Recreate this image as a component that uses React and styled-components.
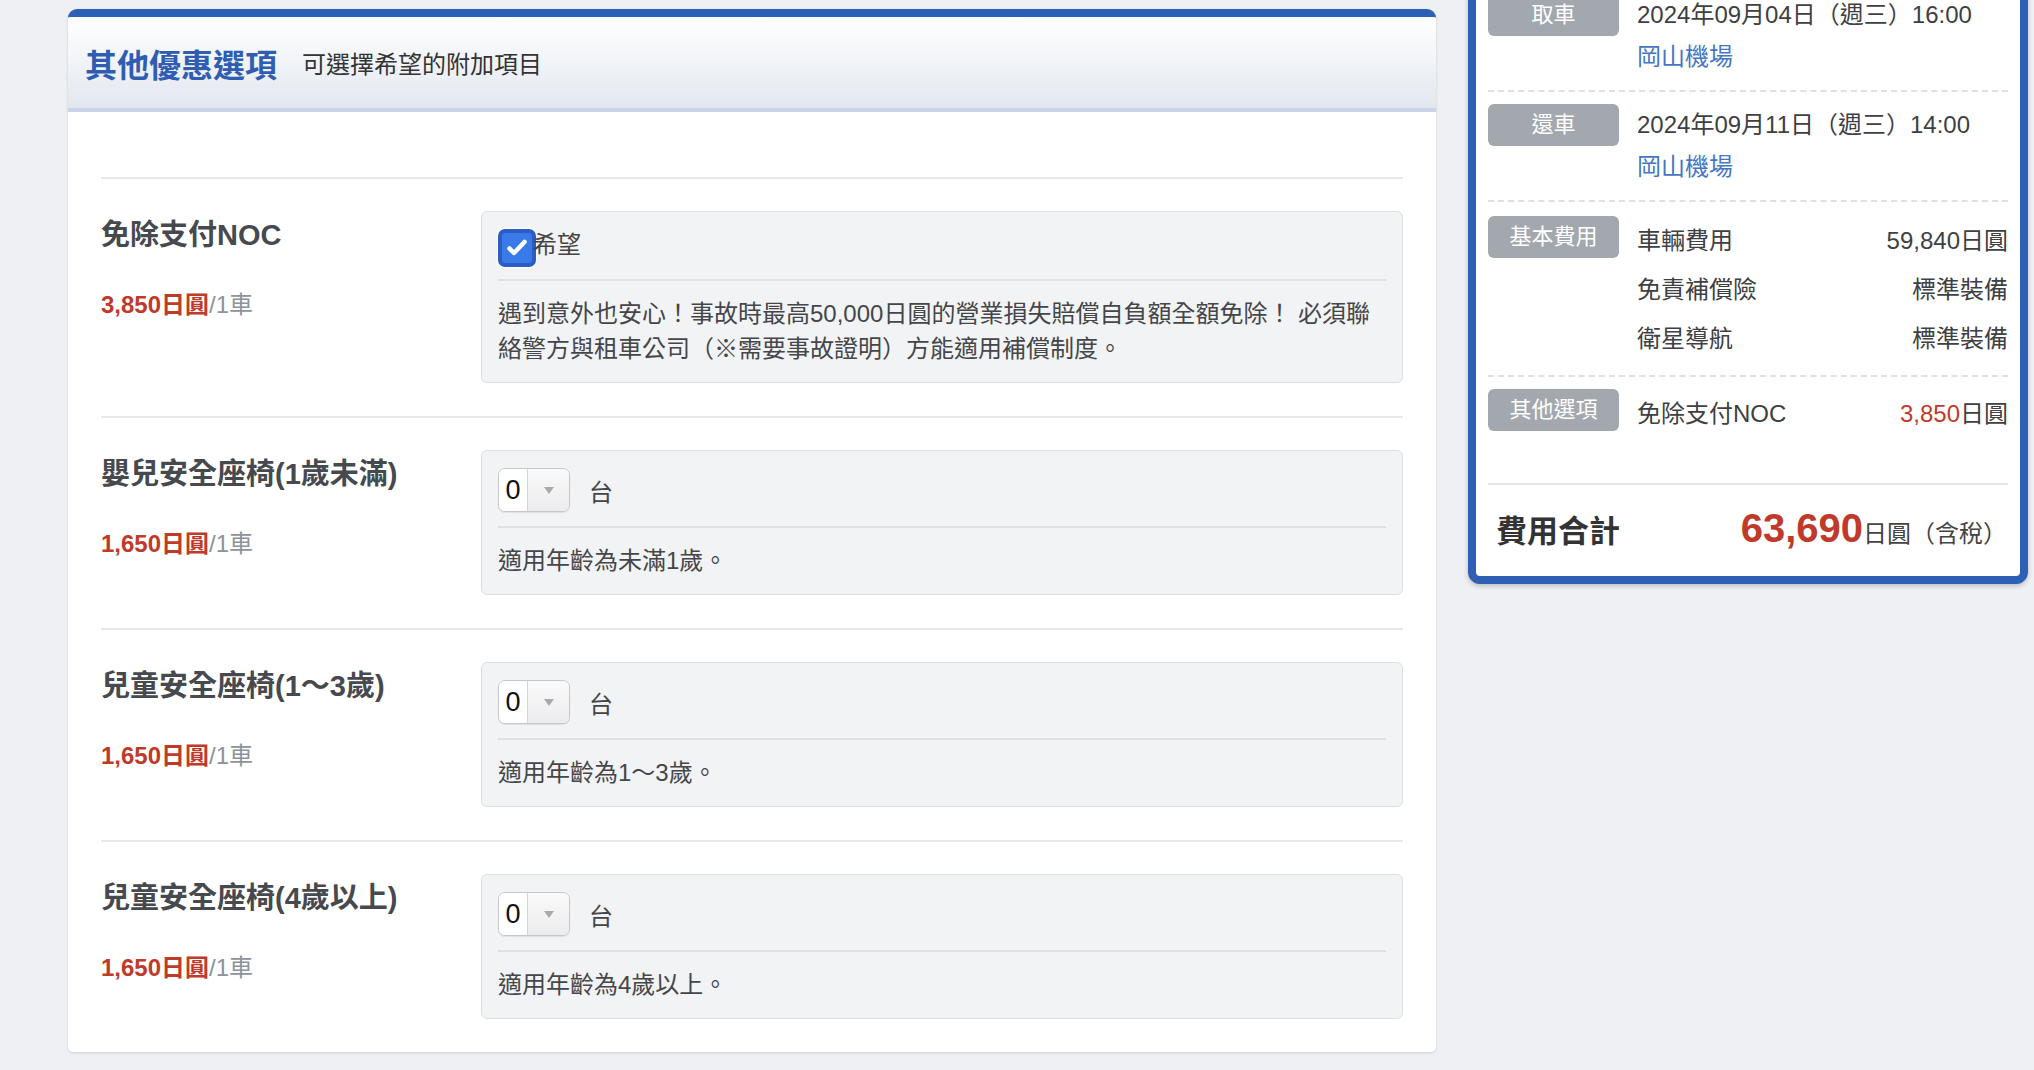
import styled, { createGlobalStyle } from "styled-components"

const GlobalStyle = createGlobalStyle`
    html, body {
        margin: 0;
        padding: 0;
        background: #eff0f4;
        font-family: "Liberation Sans", "Noto Sans CJK TC", sans-serif;
        color: #3e4043;
        overflow: hidden;
    }
`

const Page = styled.div`
    display: flex;
    align-items: flex-start;
    gap: 32px;
    padding: 9px 6px 0 68px;
    min-height: 100vh;
    box-sizing: border-box;
`

const Panel = styled.section`
    width: 1368px;
    flex-shrink: 0;
    background: #fff;
    border-top: 8px solid #2d5fb4;
    border-radius: 9px 9px 5px 5px;
    box-shadow: 0 1px 3px rgba(0, 0, 0, 0.14);
    overflow: hidden;
`

const PanelHeader = styled.header`
    display: flex;
    align-items: center;
    height: 91px;
    padding-left: 17px;
    background: linear-gradient(#ffffff, #e2e7ef);
    border-bottom: 4px solid #c9d5e7;
`

const PanelTitle = styled.h2`
    margin: 0;
    font-size: 32px;
    font-weight: bold;
    color: #2f5db1;
`

const PanelSub = styled.span`
    margin-left: 25px;
    font-size: 24px;
    color: #333;
`

const PanelBody = styled.div`
    padding: 65px 33px 0;
`

const OptionRow = styled.div`
    display: grid;
    grid-template-columns: 380px 1fr;
    border-top: 2px solid #e6e7e9;
    padding: 32px 0 33px;
`

const OptionName = styled.div`
    font-size: 29px;
    line-height: 48px;
    font-weight: bold;
    color: #46494e;
`

const OptionPrice = styled.div`
    margin-top: 28px;
    font-size: 24px;
    line-height: 36px;
    color: #8c939b;

    strong {
        color: #bf3a2b;
    }
`

const OptionBox = styled.div`
    background: #f2f3f5;
    border: 1px solid #dcdee2;
    border-radius: 6px;
    padding: 17px 16px 16px;
`

const ControlLine = styled.div`
    display: flex;
    align-items: center;
    height: ${(p) => p.$h}px;
    font-size: 24px;
    color: #444;
`

const Divider = styled.div`
    height: 2px;
    background: #e0e1e4;
    margin: ${(p) => p.$top}px 0 ${(p) => p.$bottom}px;
`

const Desc = styled.p`
    margin: 0;
    max-width: 884px;
    font-size: 24px;
    line-height: 35px;
    color: #454649;
`

const Check = styled.span`
    display: inline-flex;
    align-items: center;
    justify-content: center;
    width: 38px;
    height: 38px;
    box-sizing: border-box;
    border: 4px solid #2b5dc4;
    border-radius: 7px;
    background: #3a7ae8;
    box-shadow: 0 0 0 1px #fff;
`

const CheckLabel = styled.span`
    margin-left: -3px;
    font-size: 24px;
    line-height: 32px;
    align-self: flex-start;
`

const Select = styled.div`
    display: flex;
    width: 72px;
    height: 44px;
    box-sizing: border-box;
    border: 1px solid #c6c7ca;
    border-radius: 7px;
    overflow: hidden;
    box-shadow: 0 1px 1px rgba(0, 0, 0, 0.08);
`

const SelectValue = styled.span`
    width: 28px;
    background: #fff;
    border-right: 1px solid #d4d5d8;
    font-size: 27px;
    line-height: 42px;
    text-align: center;
    color: #111;
`

const SelectArrow = styled.span`
    flex: 1;
    display: flex;
    align-items: center;
    justify-content: center;
    background: linear-gradient(#fafafa, #ececee);

    &::after {
        content: "";
        border-left: 5px solid transparent;
        border-right: 5px solid transparent;
        border-top: 7px solid #a9aaae;
    }
`

const Unit = styled.span`
    margin-left: 19px;
`

const Sidebar = styled.aside`
    width: 560px;
    flex-shrink: 0;
    margin-top: -35px;
    box-sizing: border-box;
    background: #fff;
    border: 8px solid #2d5fb4;
    border-radius: 12px;
    box-shadow: 0 2px 5px rgba(0, 0, 0, 0.22);
    padding: 0 12px 4px;
`

const SummaryRow = styled.div`
    display: grid;
    grid-template-columns: 131px 1fr;
    column-gap: 18px;
    padding: ${(p) => (p.$top ? p.$top : 12)}px 0 ${(p) => (p.$last ? 45 : 12)}px;
    border-bottom: ${(p) => (p.$last ? "none" : "2px dashed #dfe0e2")};
`

const Badge = styled.div`
    height: 42px;
    line-height: 42px;
    border-radius: 6px;
    background: #a3a8ae;
    color: #fff;
    font-size: 22px;
    text-align: center;
`

const Lines = styled.div`
    font-size: 24px;
    color: #3e4043;
`

const Line = styled.div`
    display: flex;
    justify-content: space-between;
    line-height: ${(p) => p.$lh}px;
    color: ${(p) => (p.$link ? "#4676c2" : "inherit")};
`

const Red = styled.span`
    color: #bf3a2b;
`

const Total = styled.div`
    display: flex;
    align-items: center;
    justify-content: space-between;
    height: 87px;
    padding: 0 1px 0 8px;
    border-top: 2px solid #e4e5e7;
`

const TotalLabel = styled.span`
    font-size: 31px;
    font-weight: bold;
    color: #333;
`

const TotalAmount = styled.span`
    display: flex;
    align-items: baseline;
    font-size: 24px;
    color: #444;

    strong {
        font-size: 40px;
        color: #bf3a2b;
    }
`

const seats = [
    { name: "嬰兒安全座椅(1歲未滿)", note: "適用年齡為未滿1歲。" },
    { name: "兒童安全座椅(1～3歲)", note: "適用年齡為1～3歲。" },
    { name: "兒童安全座椅(4歲以上)", note: "適用年齡為4歲以上。" },
]

function Price({ yen }) {
    return (
        <OptionPrice>
            <strong>{yen}日圓</strong>/1車
        </OptionPrice>
    )
}

export default function App() {
    return (
        <>
            <GlobalStyle />
            <Page>
                <Panel>
                    <PanelHeader>
                        <PanelTitle>其他優惠選項</PanelTitle>
                        <PanelSub>可選擇希望的附加項目</PanelSub>
                    </PanelHeader>
                    <PanelBody>
                        <OptionRow>
                            <div>
                                <OptionName>免除支付NOC</OptionName>
                                <Price yen="3,850" />
                            </div>
                            <OptionBox>
                                <ControlLine $h={38}>
                                    <Check>
                                        <svg width="24" height="24" viewBox="0 0 24 24" fill="none" stroke="#fff" strokeWidth="4.5" strokeLinecap="round" strokeLinejoin="round">
                                            <path d="M4.5 12.5l4.5 4.5L19.5 6" />
                                        </svg>
                                    </Check>
                                    <CheckLabel>希望</CheckLabel>
                                </ControlLine>
                                <Divider $top={12} $bottom={15} />
                                <Desc>
                                    遇到意外也安心！事故時最高50,000日圓的營業損失賠償自負額全額免除！ 必須聯絡警方與租車公司（※需要事故證明）方能適用補償制度。
                                </Desc>
                            </OptionBox>
                        </OptionRow>
                        {seats.map((s) => (
                            <OptionRow key={s.name}>
                                <div>
                                    <OptionName>{s.name}</OptionName>
                                    <Price yen="1,650" />
                                </div>
                                <OptionBox>
                                    <ControlLine $h={44}>
                                        <Select>
                                            <SelectValue>0</SelectValue>
                                            <SelectArrow />
                                        </Select>
                                        <Unit>台</Unit>
                                    </ControlLine>
                                    <Divider $top={14} $bottom={15} />
                                    <Desc>{s.note}</Desc>
                                </OptionBox>
                            </OptionRow>
                        ))}
                    </PanelBody>
                </Panel>

                <Sidebar>
                    <SummaryRow>
                        <Badge>取車</Badge>
                        <Lines>
                            <Line $lh={42}>2024年09月04日（週三）16:00</Line>
                            <Line $lh={42} $link>岡山機場</Line>
                        </Lines>
                    </SummaryRow>
                    <SummaryRow>
                        <Badge>還車</Badge>
                        <Lines>
                            <Line $lh={42}>2024年09月11日（週三）14:00</Line>
                            <Line $lh={42} $link>岡山機場</Line>
                        </Lines>
                    </SummaryRow>
                    <SummaryRow $top={14}>
                        <Badge>基本費用</Badge>
                        <Lines>
                            <Line $lh={49}><span>車輛費用</span><span>59,840日圓</span></Line>
                            <Line $lh={49}><span>免責補償險</span><span>標準裝備</span></Line>
                            <Line $lh={49}><span>衛星導航</span><span>標準裝備</span></Line>
                        </Lines>
                    </SummaryRow>
                    <SummaryRow $last>
                        <Badge>其他選項</Badge>
                        <Lines>
                            <Line $lh={49}><span>免除支付NOC</span><span><Red>3,850</Red>日圓</span></Line>
                        </Lines>
                    </SummaryRow>
                    <Total>
                        <TotalLabel>費用合計</TotalLabel>
                        <TotalAmount>
                            <strong>63,690</strong>日圓（含稅）
                        </TotalAmount>
                    </Total>
                </Sidebar>
            </Page>
        </>
    )
}
